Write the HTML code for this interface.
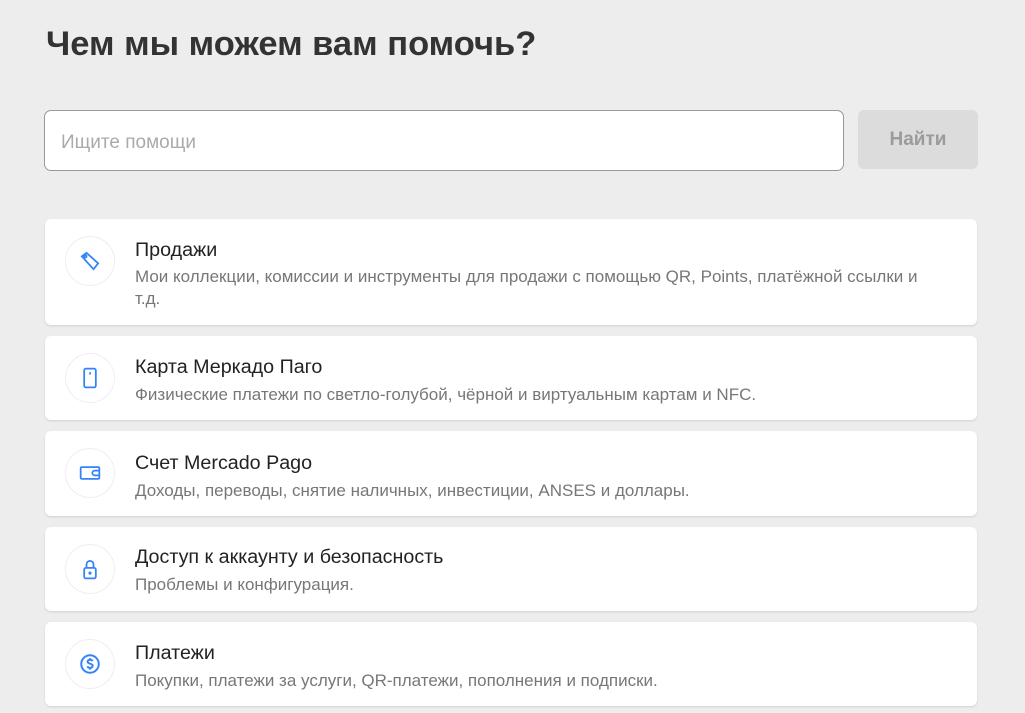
<!DOCTYPE html>
<html><head><meta charset="utf-8"><style>
body{margin:0;background:#ededed;font-family:"Liberation Sans",Arial,sans-serif;width:1025px;height:713px;overflow:hidden;position:relative}
h1{position:absolute;left:46px;top:25px;margin:0;font-size:34.5px;font-weight:700;color:#333}
.inp{position:absolute;left:44px;top:110px;width:800px;height:61px;box-sizing:border-box;background:#fff;border:1px solid #999;border-radius:7px;font-size:19px;color:#aaa;padding:21px 16px}
.btn{position:absolute;left:858px;top:110px;width:120px;height:59px;background:#dcdcdc;border-radius:6px;color:#9b9b9b;font-weight:700;font-size:19px;text-align:center;line-height:60px}
.card{position:absolute;left:45px;width:932px;background:#fff;border-radius:6px;box-shadow:0 1px 2px rgba(0,0,0,.12)}
.ic{position:absolute;left:20px;width:48px;height:48px;border:1px solid #eee;border-radius:50%;display:flex;align-items:center;justify-content:center}
.t{position:absolute;left:90px;font-size:19.7px;color:#222}
.d{position:absolute;left:90px;width:830px;font-size:17px;color:#777;line-height:22px}
</style></head><body>
<h1>Чем мы можем вам помочь?</h1>
<div class="inp">Ищите помощи</div>
<div class="btn">Найти</div>

<div class="card" style="top:219px;height:106px">
<div class="ic" style="top:17px"><svg width="28" height="28" viewBox="0 0 24 24" fill="none" stroke="#3483fa" stroke-width="1.5"><path d="M5 8l4-3 10 9-4 5z"/><circle cx="8" cy="8" r="1"/></svg></div>
<div class="t" style="top:20px">Продажи</div>
<div class="d" style="top:47px">Мои коллекции, комиссии и инструменты для продажи с помощью QR, Points, платёжной ссылки и<br>т.д.</div>
</div>

<div class="card" style="top:336px;height:84px">
<div class="ic" style="top:17px"><svg width="28" height="28" viewBox="0 0 24 24" fill="none" stroke="#3483fa" stroke-width="1.5"><rect x="7" y="4" width="10" height="16" rx="1.5"/><path d="M12 7v2"/></svg></div>
<div class="t" style="top:20px">Карта Меркадо Паго</div>
<div class="d" style="top:48px">Физические платежи по светло-голубой, чёрной и виртуальным картам и NFC.</div>
</div>

<div class="card" style="top:431px;height:85px">
<div class="ic" style="top:17px"><svg width="28" height="28" viewBox="0 0 24 24" fill="none" stroke="#3483fa" stroke-width="1.5"><rect x="4" y="7" width="16" height="10" rx="1"/><path d="M20 10h-4a2 2 0 0 0 0 4h4"/></svg></div>
<div class="t" style="top:21px">Счет Mercado Pago</div>
<div class="d" style="top:49px">Доходы, переводы, снятие наличных, инвестиции, ANSES и доллары.</div>
</div>

<div class="card" style="top:527px;height:84px">
<div class="ic" style="top:17px"><svg width="28" height="28" viewBox="0 0 24 24" fill="none" stroke="#3483fa" stroke-width="1.5"><rect x="7" y="11" width="10" height="9" rx="1.5"/><path d="M9 11V8a3 3 0 0 1 6 0v3"/><circle cx="12" cy="15.5" r=".6" fill="#3483fa"/></svg></div>
<div class="t" style="top:19px">Доступ к аккаунту и безопасность</div>
<div class="d" style="top:47px">Проблемы и конфигурация.</div>
</div>

<div class="card" style="top:622px;height:84px">
<div class="ic" style="top:17px"><svg width="28" height="28" viewBox="0 0 24 24" fill="none" stroke="#3483fa" stroke-width="1.7"><circle cx="12" cy="12" r="7.5"/><path d="M14.2 9.5c-.4-.8-1.2-1.1-2.2-1.1-1.3 0-2.1.7-2.1 1.6 0 2.2 4.4 1.2 4.4 3.6 0 1-.9 1.7-2.3 1.7-1 0-1.9-.4-2.3-1.2M12 7v1.4M12 15.3v1.5"/></svg></div>
<div class="t" style="top:20px">Платежи</div>
<div class="d" style="top:48px">Покупки, платежи за услуги, QR-платежи, пополнения и подписки.</div>
</div>
</body></html>
